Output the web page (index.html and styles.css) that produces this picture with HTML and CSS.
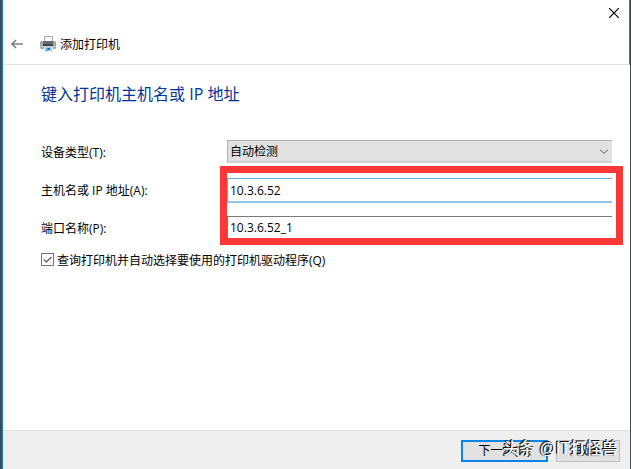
FILE: index.html
```
<!DOCTYPE html>
<html lang="zh-CN">
<head>
    <meta charset="UTF-8">
    <meta name="viewport" content="width=device-width, initial-scale=1.0">
    <title>添加打印机</title>
    <link rel="stylesheet" href="styles.css">
</head>
<body>
    <form class="wizard">
        <!-- 标题栏 -->
        <header class="header">
            <button type="button" class="close" aria-label="关闭">
                <svg width="10" height="10" viewBox="0 0 10 10"><path d="M0 0L10 10M10 0L0 10" stroke="#000" stroke-width="1.2"/></svg>
            </button>
            <div class="title-row">
                <button type="button" class="back" aria-label="返回">
                    <svg width="12" height="10" viewBox="0 0 12 10" fill="none" stroke="#808080" stroke-width="1.6"><path d="M12 5H1M5 1L1 5L5 9"/></svg>
                </button>
                <svg class="printer" width="16" height="16" viewBox="0 0 16 16">
                    <path d="M4.500 .5h8v6h-8z" fill="#f8f8f8" stroke="#a9adaf"/>
                    <path d="M1 5h14l1 1v6l-1 1H1l-1-1V6z" fill="#a3a6a8"/>
                    <path d="M3 5h10v4H3z" fill="#676c6f"/>
                    <path d="M3 8h10v2H3z" fill="#42474a"/>
                    <path d="M0 10h16v1H0z" fill="#c4c7c9"/>
                    <path d="M14 8h1v1h-1z" fill="#7fd06f"/>
                    <path d="M4 11h9v5H4z" fill="#d9e9ef"/>
                    <path d="M5 11h7v4H5z" fill="#a9d8ea"/>
                    <path d="M6 12h2v3H6z" fill="#4eaed6"/>
                    <path d="M8 12h2v2H8z" fill="#1f6f99"/>
                </svg>
                <span class="title">添加打印机</span>
            </div>
        </header>

        <!-- 表单内容 -->
        <main class="content">
            <h1>键入打印机主机名或 IP 地址</h1>
            <div class="row">
                <label for="device">设备类型(T):</label>
                <div class="select-box">
                    <select id="device">
                        <option>自动检测</option>
                    </select>
                    <svg class="chevron" width="8" height="5" viewBox="0 0 8 5"><path d="M0 .5L4 4.500L8 .5" fill="none" stroke="#555"/></svg>
                </div>
            </div>
            <div class="marked">
                <div class="row">
                    <label for="host">主机名或 IP 地址(A):</label>
                    <input type="text" id="host" class="active" value="10.3.6.52">
                </div>
                <div class="row">
                    <label for="port">端口名称(P):</label>
                    <input type="text" id="port" value="10.3.6.52_1">
                </div>
            </div>
            <div class="check">
                <input type="checkbox" id="query" checked>
                <label for="query">查询打印机并自动选择要使用的打印机驱动程序(Q)</label>
            </div>
        </main>

        <!-- 底部按钮 -->
        <footer class="footer">
            <button type="button" class="btn next">下一步(N)</button>
            <button type="button" class="btn cancel">取消</button>
            <span class="watermark">头条 @IT打怪兽</span>
        </footer>
    </form>
</body>
</html>
```
FILE: styles.css
```
* {
    box-sizing: border-box;
}
body {
    margin: 0;
    padding: 0 1px 0 2px;
    background-color: #48494c;
    color: #000;
    font: 12px/16px "Open Sans", "Noto Sans CJK SC", sans-serif;
}
button, input, select {
    font: inherit;
    color: inherit;
    margin: 0;
}
.wizard {
    display: flex;
    flex-direction: column;
    min-height: 100vh;
    border-left: 1px solid #0b84da;
    background-color: #fff;
}
/* 标题栏 */
.header {
    display: flex;
    flex-direction: column;
    height: 65px;
    border-right: 1px solid #2f77ae;
    border-bottom: 1px solid #e3e3e3;
}
.close, .back {
    display: flex;
    padding: 0;
    border: none;
    background: none;
    cursor: pointer;
}
.close {
    align-self: flex-end;
    margin: 8px 10px 0 0;
}
.title-row {
    display: flex;
    align-items: center;
    padding: 17px 8px 0;
}
.title {
    padding-top: 2px;
}
.printer {
    margin: 0 4px 0 17px;
}
/* 表单 */
.content {
    flex: 1;
    padding: 17px 18px 0 38px;
}
h1 {
    margin: 0 0 34px;
    color: #003399;
    font-size: 16px;
    line-height: 24px;
    font-weight: normal;
}
.row {
    display: grid;
    grid-template-columns: 186px 1fr;
    align-items: start;
    height: 24px;
    margin-bottom: 14px;
}
.row label {
    padding-top: 5px;
}
.select-box {
    position: relative;
}
select {
    display: block;
    width: 100%;
    height: 23px;
    padding: 2px 3px 0 2px;
    border: 1px solid #adadad;
    border-right: none;
    border-bottom: 2px solid #d0d0d0;
    border-radius: 0;
    background-color: #e1e1e1;
    appearance: none;
}
.chevron {
    position: absolute;
    right: 4px;
    top: 9px;
}
input[type="text"] {
    width: 100%;
    height: 24px;
    padding: 0 2px 2px;
    border: 1px solid #7a7a7a;
    border-right: none;
    border-bottom: none;
    border-radius: 0;
    background-color: #fff;
    outline: none;
}
input[type="text"].active {
    height: 25px;
    padding-bottom: 0;
    border-color: #66aee0;
    border-bottom: 2px solid #8ec5ec;
}
/* 红色标记框 */
.marked {
    position: relative;
}
.marked::after {
    content: "";
    position: absolute;
    top: -12px;
    right: -11px;
    bottom: -5px;
    left: 179px;
    border: 7px solid #fb3838;
    pointer-events: none;
}
.marked .row:last-child {
    margin-bottom: 0;
}
.check {
    display: flex;
    align-items: flex-start;
    margin-top: 13px;
}
.check input {
    appearance: none;
    width: 13px;
    height: 13px;
    margin-right: 3px;
    border: 1px solid #777;
    background: #fff url("data:image/svg+xml,%3Csvg xmlns='http://www.w3.org/2000/svg' viewBox='0 0 11 11'%3E%3Cpath d='M2 5.500L4.500 8L9.500 3' fill='none' stroke='%23555' stroke-width='1.2'/%3E%3C/svg%3E") center no-repeat;
}
/* 底部 */
.footer {
    position: relative;
    display: flex;
    justify-content: flex-end;
    gap: 8px;
    height: 39px;
    padding: 9px 10px 0 0;
    border-top: 1px solid #dfdfdf;
    background-color: #efefef;
}
.btn {
    height: 22px;
    padding: 0;
    border: 1px solid #bfbfbf;
    background-color: #e1e1e1;
}
.next {
    width: 87px;
    border: 2px solid #0b84e8;
}
.cancel {
    width: 64px;
}
.watermark {
    position: absolute;
    right: 12px;
    top: 6px;
    color: #fff;
    font-family: "Liberation Sans", "Noto Sans CJK SC", sans-serif;
    font-size: 16px;
    font-weight: 500;
    line-height: 24px;
    white-space: nowrap;
    text-shadow: -1px -1px 0 #111, -1px 0 1px #222;
    pointer-events: none;
}
```
